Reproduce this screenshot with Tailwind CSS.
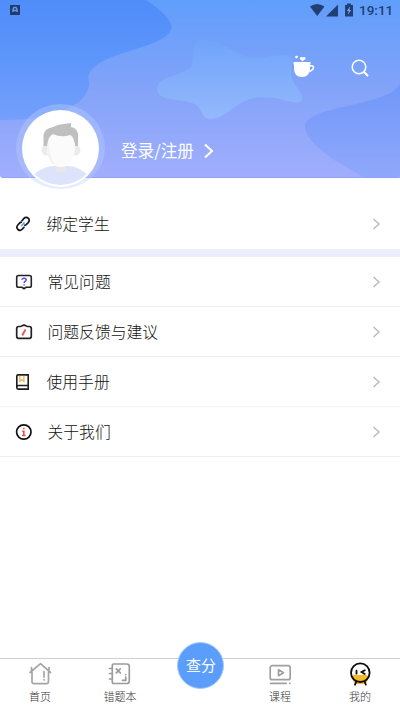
<!DOCTYPE html>
<html lang="zh-CN">
<head>
<meta charset="utf-8">
<title>我的</title>
<script src="https://cdn.jsdelivr.net/npm/@tailwindcss/browser@4"></script>
</head>
<body class="bg-white">
<div class="relative flex h-[711px] w-[400px] flex-col overflow-hidden bg-white font-['Noto_Sans_CJK_SC',sans-serif] font-light text-[#111]">
  <header class="relative h-[178px] shrink-0">
    <svg class="absolute inset-0" width="400" height="178" viewBox="0 0 400 178">
      <defs>
        <linearGradient id="base" x1="0" y1="0" x2="0" y2="178" gradientUnits="userSpaceOnUse"><stop offset="0" stop-color="#5f9efb"/><stop offset=".5" stop-color="#83a3f9"/><stop offset="1" stop-color="#a1aefc"/></linearGradient>
        <linearGradient id="left" x1="0" y1="0" x2="0" y2="120" gradientUnits="userSpaceOnUse"><stop offset="0" stop-color="#4f8df9"/><stop offset=".45" stop-color="#5c95fb"/><stop offset="1" stop-color="#759ffb"/></linearGradient>
        <linearGradient id="blob" x1="0" y1="40" x2="0" y2="118" gradientUnits="userSpaceOnUse"><stop offset="0" stop-color="#70a4fa"/><stop offset="1" stop-color="#94b8fc"/></linearGradient>
        <linearGradient id="right" x1="0" y1="83" x2="0" y2="178" gradientUnits="userSpaceOnUse"><stop offset="0" stop-color="#7097f9"/><stop offset="1" stop-color="#90a8fb"/></linearGradient>
      </defs>
      <path d="M0 0H400V178H3Q0 178 0 175Z" fill="url(#base)"/>
      <path d="M0 0H146C158 8 171 18 171.500 27C171 39 148 45 130 51C109 57 87 66 88.500 79C91 87 86 95 80 101C60 116 34 120 0 120Z" fill="url(#left)"/>
      <path d="M200 39.500C222 38 235 56 253 58C268 58 283 51 293 58C290 72 291 80 296 86C300 92 303 95 302 99C299 107 285 99 272 97.500C264 98 262 97 256 97.500C235 101 226 119 210 119C200 119 204 107 192 103C180 98 158 102 157 89C157 76 180 77 191 67C196 58 189 44 200 39.500Z" fill="url(#blob)"/>
      <path d="M400 83C392 106 309 105 305 125C304 143 337 163 366 178H397Q400 178 400 175Z" fill="url(#right)"/>
      <path d="M2 177.500H398" stroke="#829cf2" stroke-opacity=".55"/>
    </svg>
    <div class="relative flex h-5 items-center pr-[8px] pl-[10px] text-[#223f73]">
      <svg width="10" height="10" viewBox="0 0 10 10"><path d="M0 0H10V10H0Z" fill="#213c6d"/><path d="M3 7V4.500L4 2.500H6L7 4.500V7M3.500 5.500H6.500" fill="none" stroke="#659bf4" stroke-width="1.400"/></svg>
      <svg class="ml-auto" width="47" height="14" viewBox="0 0 47 14">
        <path d="M0 3.500Q7.200 -1.500 14.500 3.500L7.200 13Z" fill="currentColor"/>
        <path d="M28 1.500V13.500H16Z" fill="currentColor"/>
        <path d="M35 2H37V.500H41V2H43V13.500H35Z" fill="currentColor"/><path d="M40 3.500L36.800 8H38.600L38 11.500L41.200 7H39.400Z" fill="#72a8f9"/>
      </svg>
      <span class="ml-[2px] w-[33px] whitespace-nowrap font-[Roboto,sans-serif] text-[13.5px] leading-5 font-medium">19:11</span>
    </div>
    <div class="relative mt-[34px] flex h-[28px] pl-[292px] text-white">
      <svg width="24" height="28" viewBox="0 0 24 28">
        <path d="M3.300 2.200C4.800 1 6 2 6 3L4.700 4.500L3 3.500ZM10.500 7.200L7.800 5C7.500 3 9.800 2.200 10.700 3.600C12 2.200 14 3 13.500 5Z" fill="currentColor"/>
        <path d="M1.500 8H18.500V10.500H18V14C18 20 15 23 9.800 23C5 23 2 20 2 14V10.500H1.500Z" fill="currentColor"/>
        <path d="M17.500 12C22.800 10.800 23 15.500 17.200 17.500" fill="none" stroke="currentColor" stroke-width="1.600"/>
      </svg>
      <svg class="ml-[35px]" width="20" height="28" viewBox="0 0 20 28" fill="none" stroke="currentColor" stroke-linecap="round"><circle cx="8" cy="13" r="6.800" stroke-width="1.500"/><path d="M13 18L16.500 21.500" stroke-width="2"/></svg>
    </div>
    <div class="absolute top-[104px] left-[16px] flex items-center">
      <svg width="89" height="89" viewBox="0 0 89 89">
        <defs><clipPath id="face"><circle cx="44.500" cy="44.500" r="36.500"/></clipPath></defs>
        <path d="M0 44.500A44.500 44.500 0 0 1 89 44.500A44.500 40.500 0 0 1 0 44.500Z" fill="#b9d0ff" fill-opacity=".38"/>
        <circle cx="44.500" cy="44.500" r="38.500" fill="#fff"/>
        <g clip-path="url(#face)">
          <path d="M13 89V75Q25 62 38 62H52Q64 62 76 75V89Z" fill="#dde3fa"/>
          <path d="M40 58H50V67Q45 71 40 67Z" fill="#e7e7e7"/>
        </g>
        <circle cx="31" cy="46" r="5.500" fill="#ebebeb"/><circle cx="59" cy="46" r="5.500" fill="#ebebeb"/>
        <path d="M31 30Q44 22 59 30V45C58 55 54 63 45 63C36 63 31 55 31 45Z" fill="#fbfbfb"/>
        <path d="M34 31C31 40 34 55 40 62C34 59 31 52 31 43V32Z" fill="#f2f2f2"/>
        <path d="M27.500 42V31Q28 25 37 23Q42 20 55 19V23Q61 24 62 30V42H59.500C58 36 57 32 54 31Q45 34 37 30C32 33 32 37 31 42Z" fill="#bfbfbf"/>
      </svg>
      <span class="mt-[2px] ml-4 text-[16.6px] leading-6 font-normal text-white">登录/注册</span>
      <svg class="ml-[10px] mt-1" width="10" height="16" viewBox="0 0 10 16" fill="none" stroke="white" stroke-width="2"><path d="M1 1.500L8 8L1 14.500"/></svg>
    </div>
  </header>

  <main class="flex flex-col pt-[22px] text-[15.8px] leading-6">
    <a class="flex h-[57px] items-center border-b-[8px] border-[#ebeffd] pr-[18px] pb-px pl-[15px]">
      <svg width="17" height="18" viewBox="0 0 17 18" fill="none" stroke="#151515" stroke-width="1.700" stroke-linecap="round"><path d="M7 5.700L9 3.400C10.300 2 12 2 13.200 3.200C14.600 4.500 14.500 6.200 13.200 7.600L11.200 9.600C10.700 10 10.200 10.200 9.800 10.300"/><path d="M9 12.300L7.200 14.300C6 15.600 4.200 15.600 3 14.500C1.500 13.200 1.500 11.400 2.800 10L4.700 8C5.200 7.600 5.700 7.300 6.200 7.200"/><path d="M6.800 10.500L9 8" stroke="#51a3ed"/></svg>
      <span class="ml-[14.500px]">绑定学生</span>
      <svg class="ml-auto" width="10" height="12" viewBox="0 0 10 12" fill="none" stroke="#bdbdbd" stroke-width="1.500"><path d="M1.500 1L7 6L1.500 11"/></svg>
    </a>
    <a class="flex h-[50px] items-center border-b border-[#efefef] pr-[18px] pl-[15px]">
      <svg width="18" height="18" viewBox="0 0 18 18" fill="none" stroke="#222" stroke-width="1.600"><path d="M3.500 2.500H14.500Q16.300 2.500 16.300 4.500V12.500Q16.300 14.300 14.500 14.300H11L9 15.700L7 14.300H3.500Q1.700 14.300 1.700 12.500V4.500Q1.700 2.500 3.500 2.500Z"/><path d="M7 6.800C7 4.500 11.200 4.700 11.200 6.800C11.200 8.400 9.100 8.300 9.100 10M9.100 11.200V12.500" stroke="#6544f2" stroke-width="1.500"/></svg>
      <span class="ml-[14.500px]">常见问题</span>
      <svg class="ml-auto" width="10" height="12" viewBox="0 0 10 12" fill="none" stroke="#bdbdbd" stroke-width="1.500"><path d="M1.500 1L7 6L1.500 11"/></svg>
    </a>
    <a class="flex h-[50px] items-center border-b border-[#efefef] pr-[18px] pl-[15px]">
      <svg width="18" height="18" viewBox="0 0 18 18" fill="none" stroke="#222" stroke-width="1.700"><path d="M5.500 3.500H3.700Q1.700 3.500 1.700 5.500V13.300Q1.700 15.300 3.700 15.300H14.300Q16.300 15.300 16.300 13.300V5.500Q16.300 3.500 14.300 3.500H12.500C11 3.500 11 2.200 9 2.200C7 2.200 7 3.500 5.500 3.500Z"/><path d="M10.500 6.500L7.200 12.500" stroke="#f35152" stroke-width="1.800"/></svg>
      <span class="ml-[14.500px]">问题反馈与建议</span>
      <svg class="ml-auto" width="10" height="12" viewBox="0 0 10 12" fill="none" stroke="#bdbdbd" stroke-width="1.500"><path d="M1.500 1L7 6L1.500 11"/></svg>
    </a>
    <a class="flex h-[50px] items-center border-b border-[#f3f3f3] pr-[18px] pl-[15px]">
      <svg width="17" height="18" viewBox="0 0 17 18" fill="none" stroke="#1c1c1c" stroke-width="1.600"><path d="M3 1.900H13.200V16.100H3.200Q1.800 16.100 1.800 14.500V3Q1.800 1.900 3 1.900ZM1.800 14.200Q2 12.500 3.500 12.500H13.200"/><path d="M4.900 2.700V8.200L6.900 6.700L8.900 8.200V2.700" stroke="#f2b353" stroke-width="1.300"/></svg>
      <span class="ml-[14.500px]">使用手册</span>
      <svg class="ml-auto" width="10" height="12" viewBox="0 0 10 12" fill="none" stroke="#bdbdbd" stroke-width="1.500"><path d="M1.500 1L7 6L1.500 11"/></svg>
    </a>
    <a class="flex h-[50px] items-center border-b border-[#efefef] pr-[18px] pl-[15px]">
      <svg width="18" height="18" viewBox="0 0 18 18" fill="none" stroke="#111" stroke-width="1.700"><circle cx="8.800" cy="9" r="7.200"/><path d="M8.800 4.800V6.300M7.200 8.200H8.800V12.500M7 12.500H10.600" stroke="#ef4c4c" stroke-width="1.600"/></svg>
      <span class="ml-[14.500px]">关于我们</span>
      <svg class="ml-auto" width="10" height="12" viewBox="0 0 10 12" fill="none" stroke="#bdbdbd" stroke-width="1.500"><path d="M1.500 1L7 6L1.500 11"/></svg>
    </a>
  </main>

  <nav class="mt-auto grid h-[53px] grid-cols-5 border-t border-[#cfcfcf] bg-white text-[11px] leading-4 text-[#333]">
    <a class="flex flex-col items-center pt-[3px]">
      <svg width="24" height="24" viewBox="0 0 24 24" fill="none" stroke="#a5a5a5" stroke-width="1.700" stroke-linecap="round" stroke-linejoin="round"><path d="M2 10.500L12.500 1.700L22.500 10.500M4 10V19.500Q4 21.700 6.200 21.700H18.300Q20.500 21.700 20.500 19.500V10M3.500 8V5.500M21 8V5.500M16 9.500V15M16 17.500V18"/></svg>
      <span class="mt-[2px]">首页</span>
    </a>
    <a class="flex flex-col items-center pt-[3px]">
      <svg width="24" height="24" viewBox="0 0 24 24" fill="none" stroke="#9b9b9b" stroke-width="1.700" stroke-linecap="round"><path d="M5.500 2H18.800Q21.300 2 21.300 4.500V19Q21.300 21.500 18.800 21.500H5.500Q4.300 21.500 4.300 19.500V4Q4.300 2 5.500 2ZM1.500 6.500H4M1.500 11.500H4M1.500 17H4M8.300 6.800L12.300 10.800M12.300 6.800L8.300 10.800M17.700 12.500V12.600M17.700 15.200V18.300H14.500"/></svg>
      <span class="mt-[2px]">错题本</span>
    </a>
    <a class="relative">
      <span class="absolute top-[-17px] left-[17px] flex size-[47px] items-center justify-center rounded-full border border-[#a8caf7] bg-[#5a9dfb] pb-px pl-px text-[15px] leading-5 font-normal text-white">查分</span>
    </a>
    <a class="flex flex-col items-center pt-[3px]">
      <svg width="24" height="24" viewBox="0 0 24 24" fill="none" stroke="#a0a0a0" stroke-width="1.700" stroke-linecap="round" stroke-linejoin="round"><rect x="2.200" y="3.700" width="20" height="14" rx="2"/><path d="M10.500 7.700L15.500 10.700L10.500 13.700ZM2.500 21.300H18.200M21.800 21.300H22"/></svg>
      <span class="mt-[2px]">课程</span>
    </a>
    <a class="flex flex-col items-center pt-[3px]">
      <svg width="24" height="24" viewBox="0 0 24 24" fill="none" stroke="#0b0b0b" stroke-width="1.800" stroke-linecap="round"><path d="M4 14.500C6 11.500 9 13.500 12 13C15 12.500 18 11.500 20.500 14.500C20 20 18 23 12 22C7 23 5 20 4 14.500Z" fill="#f5ba2b" stroke="none"/><circle cx="12.300" cy="10.700" r="9.300"/><path d="M8.500 8.700V11.700M16.800 8.200L13.600 10L16.800 11.900M8.300 19.700L7 22.700M16.800 19.700L17.800 22.700"/></svg>
      <span class="mt-[2px]">我的</span>
    </a>
  </nav>
</div>
</body>
</html>
